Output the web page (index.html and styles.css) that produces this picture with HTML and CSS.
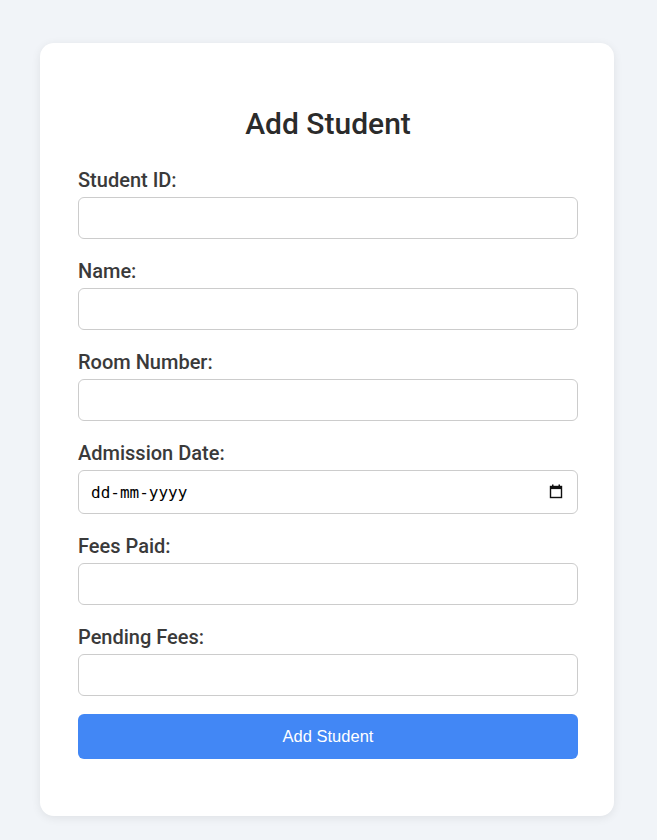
FILE: index.html
```html
<!DOCTYPE html>
<html>
<head>
<meta charset="utf-8">
<link rel="stylesheet" href="styles.css">
</head>
<body>
<div class="card">
  <h2 class="title">Add Student</h2>
  <form class="form">
    <label class="label">Student ID:</label>
    <input class="field" type="text">
    <label class="label">Name:</label>
    <input class="field" type="text">
    <label class="label">Room Number:</label>
    <input class="field" type="text">
    <label class="label">Admission Date:</label>
    <div class="date-wrap">
      <input class="field date" type="text" placeholder="dd-mm-yyyy">
      <svg class="cal" width="14" height="15" viewBox="0 0 14 15" aria-hidden="true">
        <rect x="1.5" y="2.5" width="11" height="11" fill="none" stroke="#111" stroke-width="1.4"/>
        <rect x="1.5" y="2.5" width="11" height="2.6" fill="#111"/>
        <rect x="3" y="0.5" width="1.5" height="2.5" fill="#111"/>
        <rect x="9.5" y="0.5" width="1.5" height="2.5" fill="#111"/>
      </svg>
    </div>
    <label class="label">Fees Paid:</label>
    <input class="field" type="text">
    <label class="label">Pending Fees:</label>
    <input class="field" type="text">
    <button class="btn" type="button">Add Student</button>
  </form>
</div>
</body>
</html>
```
FILE: styles.css
```css
html, body {
  margin: 0;
  padding: 0;
}
body {
  background: #f1f4f8;
  font-family: Roboto, "Liberation Sans", sans-serif;
  padding: 43px 43px 24px 40px;
}
.card {
  background: #fff;
  width: 574px;
  box-sizing: border-box;
  padding: 63px 36px 57px 38px;
  border-radius: 14px;
  box-shadow: 0 2px 10px rgba(0, 0, 0, 0.08);
}
.title {
  margin: 0 0 27px;
  text-align: center;
  font-size: 30px;
  font-weight: 500;
  color: #2b2b2b;
  line-height: 35px;
}
.form {
  display: flex;
  flex-direction: column;
}
.label {
  font-size: 20px;
  font-weight: 500;
  color: #3a3a3a;
  line-height: 24px;
  margin-bottom: 5px;
}
.field {
  height: 42px;
  box-sizing: border-box;
  border: 1px solid #cccccc;
  border-radius: 6px;
  padding: 0 12px;
  margin-bottom: 20px;
  background: #fff;
  outline: none;
}
.date-wrap {
  position: relative;
  display: flex;
  flex-direction: column;
}
.field.date {
  height: 44px;
  font-family: "DejaVu Sans Mono", "Liberation Mono", monospace;
  font-size: 16px;
  color: #000;
}
.field.date::placeholder {
  color: #000;
  opacity: 1;
}
.cal {
  position: absolute;
  right: 15px;
  top: 14px;
}
.btn {
  margin-top: -2px;
  height: 45px;
  border: none;
  border-radius: 6px;
  background: #4287f5;
  color: #fff;
  font-family: "Liberation Sans", Arial, sans-serif;
  font-size: 16.5px;
}
```
